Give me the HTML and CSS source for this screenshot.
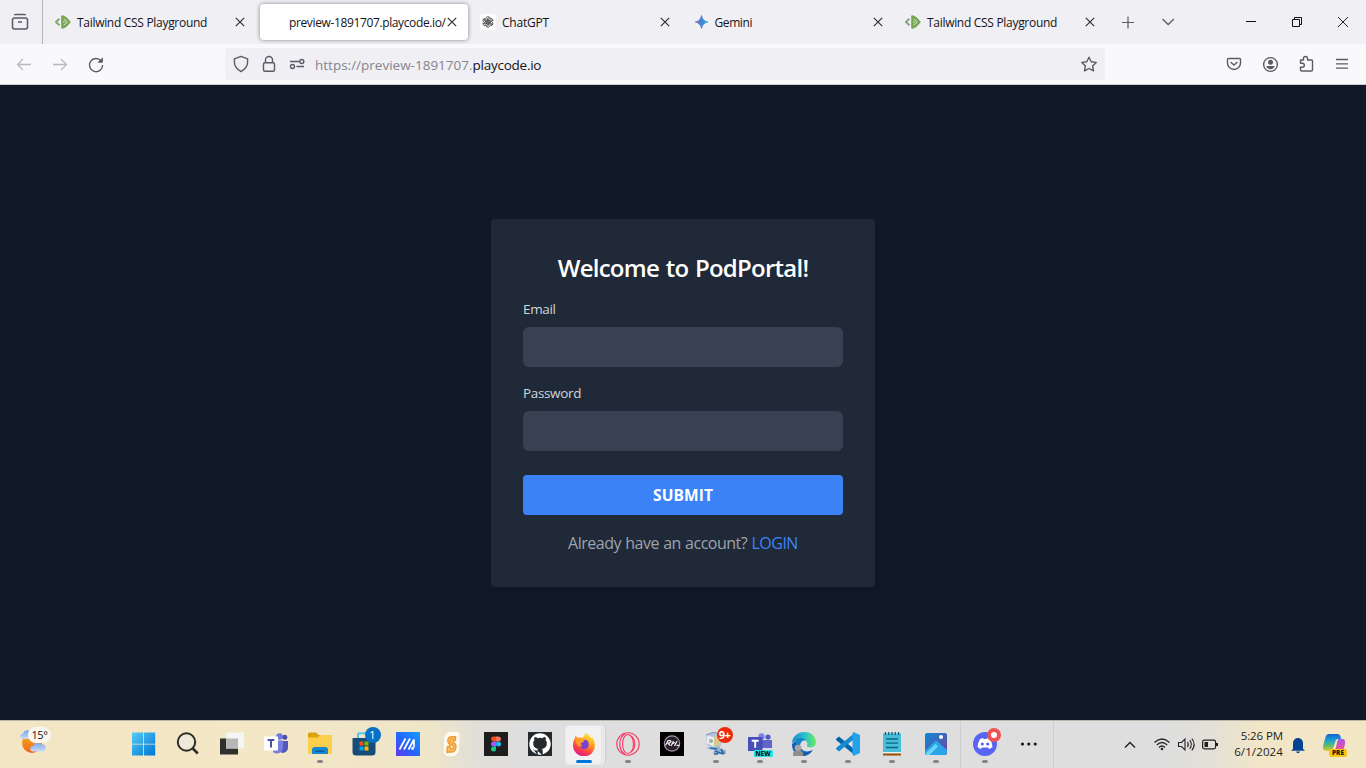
FILE: index.html
```html
<!DOCTYPE html>
<html lang="en">
<head>
<meta charset="utf-8">
<title>PodPortal</title>
<link rel="stylesheet" href="styles.css">
</head>
<body>
<svg class="defs" width="0" height="0" aria-hidden="true">
  <symbol id="x" viewBox="0 0 10 10"><path d="M.8.8l8.400 8.400M9.200.8L.8 9.200" fill="none" stroke="#2b2a33" stroke-width="1.150"/></symbol>
  <symbol id="playcode" viewBox="0 0 16 16">
    <path d="M4.500 4.600L1 8l3.500 3.400" fill="none" stroke="#84a873" stroke-width="2"/>
    <path d="M7.200 1.200q3.500 0 8.600 6.800-5.100 6.800-8.600 6.800-1 0-1-1V2.200q0-1 1-1z" fill="#78a552"/>
    <path d="M8.700 4.800L12.300 8l-3.600 3.200" fill="none" stroke="#d9e6cd" stroke-width="1"/><path d="M8.500 6.800L10 8 8.500 9.200z" fill="#d9e6cd"/>
  </symbol>
</svg>

<div class="tabbar">
  <div class="view-btn">
    <svg width="18" height="18" viewBox="0 0 18 18" fill="none" stroke="#5b5b66" stroke-width="1.500"><path d="M3.500 2.300q0-.9 1-.9h9q1 0 1 .9" /><rect x="1.500" y="4.900" width="15" height="11" rx="2"/><path d="M7 9h4"/></svg>
  </div>
  <div class="tab"><svg class="fav"><use href="#playcode"/></svg><span class="tab-title">Tailwind CSS Playground</span><svg class="tab-x"><use href="#x"/></svg></div>
  <div class="tab active"><span class="fav"></span><span class="tab-title url">preview-1891707.playcode.io/</span><svg class="tab-x"><use href="#x"/></svg></div>
  <div class="tab"><svg class="fav" viewBox="0 0 16 16"><rect width="16" height="16" rx="3" fill="#fff"/><g fill="none" stroke="#3a3a3f" stroke-width=".9" transform="translate(1.100 1.100) scale(.86)"><path id="petal" d="M8 5.400L5.500 6.900V4.100A2.500 2.500 0 0 1 9.800 2.500L7.300 4v4"/><use href="#petal" transform="rotate(60 8 8)"/><use href="#petal" transform="rotate(120 8 8)"/><use href="#petal" transform="rotate(180 8 8)"/><use href="#petal" transform="rotate(240 8 8)"/><use href="#petal" transform="rotate(300 8 8)"/></g></svg><span class="tab-title chat">ChatGPT</span><svg class="tab-x"><use href="#x"/></svg></div>
  <div class="tab"><svg class="fav" viewBox="0 0 16 16"><defs><linearGradient id="gem" x1="0" x2="1"><stop offset="0" stop-color="#8a72b8"/><stop offset=".5" stop-color="#4384d3"/><stop offset="1" stop-color="#25a9dc"/></linearGradient></defs><path d="M8.500 1.500Q9.500 7 14.800 8 9.500 9 8.500 14.500 7.500 9 2.200 8 7.500 7 8.500 1.500z" fill="url(#gem)" stroke="url(#gem)" stroke-width=".8"/></svg><span class="tab-title gemini">Gemini</span><svg class="tab-x"><use href="#x"/></svg></div>
  <div class="tab"><svg class="fav"><use href="#playcode"/></svg><span class="tab-title">Tailwind CSS Playground</span><svg class="tab-x"><use href="#x"/></svg></div>
  <svg class="plus" width="36" height="44" viewBox="0 0 36 44" fill="none" stroke="#5b5b66" stroke-width="1.200"><path d="M18 16.500v12M12 22.500h12"/></svg>
  <svg class="down" width="44" height="44" viewBox="0 0 44 44" fill="none" stroke="#5b5b66" stroke-width="1.300"><path d="M16.500 19l5.700 5.500 5.700-5.500"/></svg>
  <div class="window-btns">
    <svg width="46" height="44" viewBox="0 0 46 44" stroke="#111"><path d="M18 21.500h10"/></svg>
    <svg width="46" height="44" viewBox="0 0 46 44" fill="none" stroke="#111"><path d="M18.500 19.500h7v7h-7zM20.500 19v-1.500h7v7H26"/></svg>
    <svg width="46" height="44" viewBox="0 0 46 44" fill="none" stroke="#222"><path d="M18 17l10 10M28 17L18 27"/></svg>
  </div>
</div>

<div class="toolbar">
  <div class="nav">
    <svg width="36" height="40" viewBox="0 0 36 40" fill="none" stroke="#b9b9c0" stroke-width="1.300"><path d="M25 20.500H11.500M17 15l-5.500 5.500L17 26"/></svg>
    <svg width="36" height="40" viewBox="0 0 36 40" fill="none" stroke="#b9b9c0" stroke-width="1.300"><path d="M11 20.500h13.500M19 15l5.500 5.500L19 26"/></svg>
    <svg width="36" height="40" viewBox="0 0 36 40" fill="none" stroke="#5b5b66" stroke-width="1.400"><path d="M23.200 17A6.600 6.600 0 1 0 24.600 21"/><path d="M24.500 14v4.300h-4.300z" fill="#5b5b66" stroke-width=".8"/></svg>
  </div>
  <div class="urlbar">
    <svg width="28" height="32" viewBox="0 0 28 32" fill="none" stroke="#5b5b66" stroke-width="1.400"><path d="M14.500 8.400l6.600 2.400v3.300c0 4-2.500 7.200-6.600 9.500-4.100-2.300-6.600-5.500-6.600-9.500v-3.300z" stroke-linejoin="round" transform="translate(1.500)"/></svg>
    <svg width="28" height="32" viewBox="0 0 28 32" fill="none" stroke="#5b5b66" stroke-width="1.400"><rect x="10.500" y="14.700" width="11" height="8.500" rx="1.500"/><path d="M12.500 14.500V12a3.500 3.500 0 0 1 7 0v2.500"/></svg>
    <svg width="34" height="32" viewBox="0 0 34 32" fill="none" stroke="#5b5b66" stroke-width="1.400"><path d="M9 13.500h9M15.500 18.500H23"/><circle cx="20.800" cy="13.500" r="2"/><circle cx="11.500" cy="18.500" r="2"/></svg>
    <span class="address"><span>https://preview-1891707.</span><b>playcode.io</b></span>
    <svg class="star" width="32" height="32" viewBox="0 0 32 32" fill="none" stroke="#5b5b66" stroke-width="1.400" stroke-linejoin="round"><path d="M16 9.200l2.200 4.500 5 .7-3.600 3.500.9 5-4.500-2.400-4.500 2.400.9-5-3.600-3.500 5-.7z"/></svg>
  </div>
  <div class="tools">
    <svg viewBox="0 0 36 40" fill="none" stroke="#5b5b66" stroke-width="1.400"><path d="M12.500 14.500h11q1 0 1 1V19a6.500 6.500 0 0 1-13 0v-3.500q0-1 1-1z"/><path d="M14.600 18l3.400 3 3.400-3"/></svg>
    <svg viewBox="0 0 36 40" fill="none" stroke="#5b5b66" stroke-width="1.400"><circle cx="18.500" cy="20.500" r="6.900"/><circle cx="18.500" cy="18.200" r="2.500" fill="#5b5b66" stroke="none"/><path d="M14.300 22h8.400c-.4 2-2.200 3.200-4.200 3.200S14.700 24 14.300 22z" fill="#5b5b66" stroke="none"/></svg>
    <svg viewBox="0 0 36 40" fill="none" stroke="#5b5b66" stroke-width="1.400"><path d="M12.500 16.500h3V15a2 2 0 0 1 4 0v1.500h4q1 0 1 1v9q0 1-1 1h-10q-1 0-1-1v-2.700h1.800a2 2 0 0 0 0-4h-1.800z" stroke-linejoin="round" transform="translate(0 -.5)"/></svg>
    <svg viewBox="0 0 36 40" stroke="#5b5b66" stroke-width="1.300"><path d="M12 15.500h12M12 19.800h12M12 24.200h12"/></svg>
  </div>
</div>

<main class="page">
  <form class="card">
    <h1>Welcome to PodPortal!</h1>
    <label class="email" for="email">Email</label>
    <input id="email" type="email">
    <label class="password" for="password">Password</label>
    <input id="password" type="password">
    <button type="button"><span>SUBMIT</span></button>
    <p>Already have an account? <a>LOGIN</a></p>
  </form>
</main>

<footer class="taskbar">
  <div class="weather">
    <svg width="26" height="26" viewBox="0 0 26 26"><defs><linearGradient id="sun" x2="0" y2="1"><stop stop-color="#f7b41f"/><stop offset="1" stop-color="#ec671b"/></linearGradient><linearGradient id="cloud" x2="0" y2="1"><stop stop-color="#7da6e9"/><stop offset="1" stop-color="#c9dcf8"/></linearGradient></defs><circle cx="12" cy="13" r="10" fill="url(#sun)"/><path id="cl" d="M3 9a2.700 2.700 0 0 1 0-5.400A4.500 4.500 0 0 1 11 2a3.600 3.600 0 0 1 2 7z" fill="url(#cloud)"/><use href="#cl" transform="translate(10 12.500)"/></svg>
    <span class="temp">15°</span>
  </div>
  <div class="apps">
    <div class="app"><svg viewBox="0 0 24 24"><defs><linearGradient id="win" x2="1" y2="1"><stop stop-color="#55ccf8"/><stop offset="1" stop-color="#0074d4"/></linearGradient></defs><path fill="url(#win)" d="M0 .5h11.200v11.200H0zM12 .5h11.200v11.200H12zM0 12.500h11.200v11H0zM12 12.500h11.200v11H12z"/></svg></div>
    <div class="app"><svg viewBox="0 0 24 24" fill="none" stroke="#2c2c2a"><circle cx="10.500" cy="10" r="8.700" stroke-width="2" fill="#eee9d8"/><path d="M16.800 16.500l5 5" stroke-width="2.600"/></svg></div>
    <div class="app"><svg viewBox="0 0 24 24"><path d="M0 6.500h18v16H0z" fill="#30302f"/><path d="M6 .5h18v16H6z" fill="#f5f5f4"/><path d="M6 6.500h12v10H6z" fill="#b7b7b5"/></svg></div>
    <div class="app"><svg viewBox="0 0 24 24"><circle cx="15.500" cy="4.500" r="3.300" fill="#7177df"/><circle cx="20.800" cy="5.200" r="2.500" fill="#4c50b2"/><path d="M15 9h9v7a5 5 0 0 1-7 4.500z" fill="#5159bd"/><path d="M9 8.500h10V16a6 6 0 0 1-10 4z" fill="#777de1"/><rect y="4.500" width="14" height="14" fill="#fff"/><path d="M3.700 8h6.600M7 8v7.500" stroke="#484eaa" stroke-width="2"/></svg></div>
    <div class="app run"><svg viewBox="0 0 24 24"><path d="M0 3V2q0-1.500 1.500-1.500H8L10.500 3h12q1.500 0 1.500 1.500V8H0z" fill="#dda30f"/><path d="M0 5.500h10L12 3h10.500Q24 3 24 4.500v16q0 1.500-1.500 1.500h-21Q0 22 0 20.500z" fill="#fcd04a"/><path d="M4 22v-4q0-3 2.500-3h11q2.500 0 2.500 3v4z" fill="#1688d4"/><path d="M7.500 18.500h9v1.500h-9z" fill="#075d9f"/></svg></div>
    <div class="app"><svg viewBox="0 0 24 24"><path d="M6 6V2.500Q6 1.300 7.500 1.300h9q1.500 0 1.500 1.200V6" fill="none" stroke="#52c3ed" stroke-width="2"/><path d="M.5 6h23v14q0 3.500-3.500 3.500H4Q.5 23.500.5 20z" fill="#174c78"/><path d="M7.500 9.500h4v4h-4z" fill="#f25022"/><path d="M12.500 9.500h4v4h-4z" fill="#7fba00"/><path d="M7.500 14.500h4v4h-4z" fill="#00a4ef"/><path d="M12.500 14.500h4v4h-4z" fill="#ffb900"/></svg><span class="badge blue">1</span></div>
    <div class="app"><svg viewBox="0 0 24 24"><defs><linearGradient id="ma" x1="0" y1="1" x2="1" y2="0"><stop stop-color="#6339ed"/><stop offset=".45" stop-color="#2564fb"/><stop offset="1" stop-color="#149cff"/></linearGradient></defs><path fill="url(#ma)" d="M0 0h24v24H0z"/><path d="M3.500 17.500L9.500 6.500M8 17.500L14 6.500M12.500 17.500L18 7.500v8" fill="none" stroke="#fff" stroke-width="1.700"/><circle cx="16.500" cy="16.500" r="1.400" fill="#fff"/></svg></div>
    <div class="app"><svg viewBox="0 0 24 24"><path d="M9 0h8l2 2v9l-1 9-4 4H7l-3-3 1-17z" fill="#fffaf0" stroke="#fffaf0" stroke-linejoin="round"/><path d="M15.500 8.500V4.500L13.500 5Q8.500 3.500 7.800 8q-.2 4 4 5 2.500 1 1.300 3.500Q11 18 9.800 14L7.200 15 7 20.500l2.500-.7Q15.500 21 16 15q0-4-4-4.800-2.500-1-1-3 2-.5 2.300 1.800z" fill="#f8bd66" stroke="#ef9a31" stroke-width="1.400" stroke-linejoin="round"/></svg></div>
    <div class="app"><svg viewBox="0 0 24 24"><path fill="#1e1e1e" d="M0 0h24v24H0z"/><path d="M12 4.500H9.500a2.500 2.500 0 0 0 0 5H12z" fill="#f24e1e"/><path d="M12 4.500h2.500a2.500 2.500 0 0 1 0 5H12z" fill="#ff7262"/><path d="M12 9.500H9.500a2.500 2.500 0 0 0 0 5H12z" fill="#a259ff"/><circle cx="14.500" cy="12" r="2.500" fill="#1abcfe"/><path d="M12 14.500H9.500a2.500 2.500 0 1 0 2.500 2.500z" fill="#0acf83"/></svg></div>
    <div class="app"><svg viewBox="0 0 24 24"><path fill="#24292e" d="M0 0h24v24H0z"/><circle cx="12" cy="12" r="10.700" fill="#fff"/><path d="M9.500 23v-4.300C5.700 19.500 5 17 5 17m4.700 1.800c.1-1 .4-1.700.8-2.100-3-.3-5.100-1.700-5.100-5.400 0-1.300.4-2.300 1.200-3.100-.2-.6-.4-2 .2-3 1 0 2 .5 3 1.200 1.500-.4 3-.4 4.400 0 1-.7 2-1.200 3-1.200.6 1 .4 2.400.2 3 .8.8 1.200 1.800 1.200 3.100 0 3.700-2.100 5.100-5.100 5.400.6.600 1 1.500 1 3V23z" fill="#24292e" stroke="#24292e" stroke-width=".5"/></svg></div>
    <div class="app current"><svg viewBox="0 0 24 24"><defs><linearGradient id="fx" x1=".8" y1="0" x2=".3" y2="1"><stop stop-color="#fff13d"/><stop offset=".35" stop-color="#ffac23"/><stop offset=".68" stop-color="#ff493c"/><stop offset="1" stop-color="#e01492"/></linearGradient></defs><path d="M13.500 1q5 2.500 5.500 5.500l1-1.500q3 4 3 8a11 11 0 0 1-22 .8Q.7 9 3 6l.3-2.500L6 6q2-1.300 4 0L12 4.500z" fill="url(#fx)"/><path d="M8.500 10.500Q10 7.500 13.500 7.800q3.500 1 3.200 5A4.500 4.500 0 0 1 8 14z" fill="#7542d9"/><path d="M3.500 7q4-1.500 5.500.5 2 1.200 3.500 1-.5 2-3.400 2.400-1.200 2.300 2 2.700-3.500 2-6-.6z" fill="#ff9c24"/></svg></div>
    <div class="app run"><svg viewBox="0 0 24 24" fill="none" stroke="#f73661" stroke-width="1.100"><circle cx="12" cy="12" r="11.200"/><ellipse cx="12" cy="12" rx="5.500" ry="9.500"/><path d="M9.500 1.500Q3.800 4.500 3.800 12T9.500 22.500"/><path d="M14.500 3.500Q18.800 6.500 18.800 12T14.500 20.500"/></svg></div>
    <div class="app"><svg viewBox="0 0 24 24"><path d="M0 0h24v24H0z"/><circle cx="12" cy="11.500" r="7.700" fill="#242128" stroke="#a690b3" stroke-width="1.200"/><path d="M5.500 13.500L8 8.700h2.500q1.500 1-1.500 2.500h-1l2 2.300M11 14l2.500-5M12 12l3-1.500M14.500 14L17 9M16.500 13.300h3" fill="none" stroke="#eee" stroke-width="1.200"/></svg></div>
    <div class="app run"><svg viewBox="0 0 24 24"><path d="M2 3l8-3 8 4-1 10-7 3-7-4z" fill="#b6c5d8"/><path d="M3 3.500l8 2-1 9-7-3z" fill="#e8edf1"/><path d="M10 5l7-2-1 9-6 3z" fill="#d5c989"/><path d="M3 15l5 1 7-2 2 3 5 1v4H9l1-4-6-1z" fill="#9bb2cf"/><path d="M6 16l7 1M11 19l8 3M17 17l3 5M10 22h4" stroke="#2767a5" stroke-width="1.700"/><path d="M2 3l8-3 7 3" fill="none" stroke="#7891ba"/><circle cx="7" cy="9" r="2" fill="#a6aaab"/></svg><span class="badge red">9+</span></div>
    <div class="app run"><svg viewBox="0 0 24 24"><circle cx="13.500" cy="4.500" r="3.200" fill="#7b83eb"/><circle cx="20" cy="5" r="2.600" fill="#5059c9"/><path d="M14 8h10v8H14z" fill="#6165cc"/><rect y="5" width="14.500" height="14" fill="#464eb8"/><path d="M3.700 8.700h7M7.200 8.700v7" stroke="#fff" stroke-width="1.900"/></svg><span class="new">NEW</span></div>
    <div class="app run"><svg viewBox="0 0 24 24"><defs><linearGradient id="edge"><stop stop-color="#168ac9"/><stop offset=".5" stop-color="#29bed4"/><stop offset="1" stop-color="#6bea5f"/></linearGradient></defs><path d="M0 11C1-3 23-4 24 10c.2 5-5 6-8 5-2-1-.5-2-.5-3.500 0-4-9-6-15.500-.5z" fill="url(#edge)"/><path d="M0 12Q5 6.500 11 8q-5 3.500-2 8.500 4 5 12 1.500-4 6-10 6Q0 23 0 12z" fill="#1162b1"/><path d="M4 8Q9 4 14 8q-5 0-6 5 0 5 5 7-6 0-9-7z" fill="#1384c5"/><circle cx="6" cy="16" r="3.300" fill="#aaa39f"/><path d="M1 24v-3q1-2.500 5-2.500t5 2.500v3z" fill="#958d89"/></svg></div>
    <div class="app run"><svg viewBox="0 0 24 24"><path d="M0 7l3-2.500L18 17v5.500L0 8z" fill="#0065a9"/><path d="M0 17l3 2.500L18 7V1.500L0 16z" fill="#168bd0"/><path d="M17.500 0L24 3v18l-6.500 3-1-1.500v-21z" fill="#24a3ec"/></svg></div>
    <div class="app run"><svg viewBox="0 0 24 24"><path d="M3 1.500h18V20H3z" fill="#48bdd7"/><path d="M5.500 0v3M8.700 0v3M12 0v3M15.300 0v3M18.500 0v3" stroke="#075f7e" stroke-width="1.300"/><path d="M6 7h12M6 11.200h12M6 15.500h12" stroke="#066784" stroke-width="1.300"/><path d="M3 20h18v1.500H3z" fill="#edf3ef"/><path d="M3 21.500h18v2H3z" fill="#984c09"/></svg></div>
    <div class="app run"><svg viewBox="0 0 24 24"><defs><linearGradient id="photo" x2="1" y2="1"><stop stop-color="#0b89d4"/><stop offset="1" stop-color="#75419d"/></linearGradient></defs><rect x="1" y="1" width="22" height="22" rx="2" fill="url(#photo)"/><path d="M1 19L10.500 9.500q1.500-1.500 3 0L23 18v2q0 3-3 3H4q-3 0-3-3z" fill="#2aa6e8"/><path d="M1.500 21.500l10-9.500 2.500 2.500L5.500 23H4q-2 0-2.500-1.500z" fill="#68d6fa"/><circle cx="17" cy="5" r="2" fill="#fff"/></svg></div>
  </div>
  <div class="extra">
    <div class="app run"><svg viewBox="0 0 24 24"><circle cx="12" cy="12" r="12" fill="#5865f2"/><path d="M7 7l3-1 .6 1h2.800l.6-1 3 1q2.300 4 2.500 8-1.700 1.500-3.500 2l-1-1.500H9L8 17q-1.800-.5-3.500-2Q4.700 11 7 7z" fill="#fff"/><circle cx="9.300" cy="12" r="1.600" fill="#5865f2"/><circle cx="14.700" cy="12" r="1.600" fill="#5865f2"/></svg><span class="badge ring"></span></div>
    <div class="app"><svg viewBox="0 0 24 24" fill="#191919"><circle cx="5.500" cy="12" r="1.600"/><circle cx="11.800" cy="12" r="1.600"/><circle cx="18.200" cy="12" r="1.600"/></svg></div>
  </div>
  <div class="tray">
    <svg class="up" width="20" height="20" viewBox="0 0 20 20" fill="none" stroke="#222" stroke-width="1.400"><path d="M5 12.500l5-5 5 5"/></svg>
    <svg width="24" height="20" viewBox="0 0 24 20" fill="none" stroke="#252525" stroke-width="1.200"><path d="M4.500 7.500q7.500-7 15 0M6.800 10q5.200-5 10.400 0M9 12.500q3-3 6 0"/><circle cx="12" cy="14" r="1.300" fill="#252525" stroke="none"/></svg>
    <svg width="24" height="20" viewBox="0 0 24 20" fill="none" stroke="#252525" stroke-width="1.100"><path d="M4.500 7.500h3L11 4v11L7.500 11.500h-3zM13.500 7q1.700 2.500 0 5M15.700 5.200q3.300 4.300 0 8.600M17.800 3.500q4.700 6 0 12"/></svg>
    <svg width="24" height="20" viewBox="0 0 24 20" fill="none" stroke="#202020" stroke-width="1.200"><rect x="4.600" y="5.100" width="13" height="8.800" rx="1.800"/><path d="M6.500 7h3.500v5H6.500z" fill="#202020" stroke="none"/><path d="M19 8v3" stroke-width="2"/></svg>
    <div class="clock"><span>5:26 PM</span><span class="date">6/1/2024</span></div>
    <svg class="bell" width="16" height="18" viewBox="0 0 16 18" fill="#064393"><path d="M3 13V7a5 5 0 0 1 10 0v6l1.500 1v.7h-13V14zM6 15.500h4q-.5 1.700-2 1.700t-2-1.700z"/></svg>
    <div class="copilot"><svg width="26" height="24" viewBox="0 0 26 24"><defs><linearGradient id="c1" x2="0" y2="1"><stop stop-color="#1560d1"/><stop offset=".35" stop-color="#189ed4"/><stop offset=".7" stop-color="#62bd67"/><stop offset="1" stop-color="#e3cd32"/></linearGradient><linearGradient id="c2" x2="0" y2="1"><stop stop-color="#a857ea"/><stop offset=".6" stop-color="#e3559f"/><stop offset="1" stop-color="#f37b50"/></linearGradient></defs><path d="M7 1h8q3 0 3.700 3L19 6h-3q-2 0-2.500 2L11 16q-.5 2-3 2H5Q0 18 1 13L3.500 4Q4.500 1 7 1z" fill="url(#c1)"/><path d="M17 6h3q4 0 3 5l-2 8q-1 2.500-3 2.500h-8q2 0 2.500-2L15.500 8q.5-2 1.500-2z" fill="url(#c2)"/></svg><span class="pre">PRE</span></div>
  </div>
</footer>
</body>
</html>
```
FILE: styles.css
```css
* { box-sizing: border-box; }
body { margin: 0; width: 1366px; height: 768px; overflow: hidden; display: flex; flex-direction: column; font-family: "Open Sans", "Noto Sans", sans-serif; }
svg { display: block; flex: none; }
.defs { position: absolute; }

/* tab strip */
.tabbar { height: 44px; display: flex; background: #f0eff4; flex: none; }
.view-btn { width: 43px; margin-right: 4px; border-right: 1px solid #b5b4bb; padding: 13px 0 0 11px; }
.tab { width: 212.5px; display: flex; align-items: center; padding: 0 14.5px 0 8px; flex: none; }
.fav { width: 16px; height: 16px; flex: none; margin-right: 6px; }
.tab-title { flex: 1; font-size: 12px; line-height: 18px; letter-spacing: -.3px; color: #15141a; white-space: nowrap; padding-top: 2px; }
.tab-title.url { letter-spacing: -.37px; }
.tab-title.chat { letter-spacing: -.2px; }
.tab-title.gemini { letter-spacing: -.4px; }
.tab-x { width: 10px; height: 10px; }
.tab.active { height: 36px; margin: 4px 4px 0 .5px; width: 208px; padding: 0 11.5px 0 7px; background: #fff; border-radius: 4px; box-shadow: 0 0 4px rgba(0, 0, 0, .45); }
.down { margin-left: .5px; }
.window-btns { display: flex; margin-left: auto; }

/* navigation */
.toolbar { height: 41px; flex: none; display: flex; background: #f9f9fb; border-bottom: 1px solid #cfcfd3; }
.nav { display: flex; padding-left: 6px; width: 225px; }
.urlbar { width: 880px; height: 32px; margin-top: 4px; border-radius: 4px; background: #f0eff4; display: flex; align-items: center; }
.address { font-size: 13.500px; color: #85848c; letter-spacing: 0; white-space: nowrap; padding-top: 2px; }
.address b { font-weight: 400; color: #15141a; letter-spacing: -.25px; }
.star { margin-left: auto; }
.tools { display: flex; margin-left: 111px; }
.tools svg { width: 36px; height: 40px; }

/* sign-up page */
.page { flex: 1; display: flex; align-items: center; justify-content: center; background: #111827; padding-top: 1px; }
.card { width: 384px; height: 368px; padding: 32px; border-radius: 4px; background: #202937; box-shadow: 0 4px 6px -1px rgba(0, 0, 0, .1); display: flex; flex-direction: column; }
h1 { margin: 0 0 16px; font-size: 24px; line-height: 34px; height: 32px; font-weight: 600; letter-spacing: -.75px; word-spacing: 1.200px; color: #fff; text-align: center; white-space: nowrap; }
label { font-size: 13.500px; line-height: 20px; margin-bottom: 8px; color: #d1d5db; letter-spacing: -.35px; }
input { height: 40px; width: 100%; border: 0; border-radius: 6px; background: #384151; margin: 0 0 16px; padding: 8px; }
#password { margin-bottom: 24px; }
button { height: 40px; border: 0; border-radius: 4px; background: #3b82f6; color: #fff; font: 700 15.500px/24px "Open Sans", sans-serif; letter-spacing: .1px; padding: 0; }
p { margin: 16px 0 0; text-align: center; font-size: 16px; line-height: 24px; height: 24px; color: #9ca3af; letter-spacing: -.5px; word-spacing: .6px; white-space: nowrap; }
a { color: #3b82f6; }

/* taskbar */
.taskbar { height: 48px; flex: none; display: flex; border-top: 1px solid #b9b5aa; background: linear-gradient(90deg, #f3e6c5 0, #f3e7c5 240px, #efe5c8 430px, #e2dfd8 475px, #dedede 520px, #dedede 1170px, #e4e0d5 1215px, #f2e6c7 1260px, #f3e6c5 1366px); }
.weather { width: 121.500px; position: relative; padding: 9px 0 0 20px; }
.temp { position: absolute; left: 28px; top: 6px; width: 23px; height: 16px; border-radius: 8px; background: #faf7ef; font-size: 11px; line-height: 16px; text-align: center; color: #161616; letter-spacing: -.4px; }
.apps { display: flex; width: 838.5px; }
.app { width: 44px; height: 47px; position: relative; display: flex; justify-content: center; padding-top: 11px; flex: none; }
.app > svg { width: 24px; height: 24px; z-index: 1; }
.run::after { content: ""; position: absolute; bottom: 5px; left: 19px; width: 6px; height: 3px; border-radius: 2px; background: #858585; }
.current::before { content: ""; position: absolute; left: 3px; top: 4px; width: 35px; height: 38px; border-radius: 4px; background: #f1f1f1; border: 1px solid #e8e8e8; box-shadow: 3px 0 0 #e9e9e9, 4px 0 0 #cfcfcf; }
.current::after { content: ""; position: absolute; bottom: 5px; left: 14px; width: 16px; height: 3px; border-radius: 2px; background: #0078d7; }
.badge { position: absolute; z-index: 2; height: 16px; border-radius: 8px; color: #fff; text-align: center; font-size: 11px; line-height: 16px; }
.blue { left: 23px; top: 6px; width: 16px; background: #0870c6; }
.red { left: 23px; top: 6px; width: 16px; background: #ed2b0c; letter-spacing: -.5px; font-weight: 700; }
.ring { left: 24px; top: 7px; width: 14px; height: 14px; background: #fff; border: 4px solid #ef5354; }
.new { position: absolute; z-index: 2; left: 16px; bottom: 11px; width: 19px; height: 7px; border-radius: 1px; background: #25e6e8; font-size: 6.500px; line-height: 7px; font-weight: 800; text-align: center; color: #08242a; }
.extra { width: 94px; display: flex; padding-left: 2px; border-left: 1px solid #cdcdcd; border-right: 1px solid #cdcdcd; }
.tray { flex: 1; display: flex; align-items: center; padding-left: 66px; }
.up { margin-right: 10px; }
.clock { width: 61px; height: 34px; display: flex; flex-direction: column; align-items: flex-end; font-size: 11.500px; line-height: 16px; letter-spacing: -.1px; color: #1d1d1d; white-space: nowrap; }
.date { letter-spacing: .12px; }
.bell { margin-left: 7px; }
.copilot { position: relative; margin-left: 16px; }
.pre { position: absolute; right: 1px; bottom: 0; width: 18px; height: 8px; border-radius: 2px; background: #f9c617; color: #251b00; font-size: 6.500px; line-height: 8px; font-weight: 800; text-align: center; }
```
